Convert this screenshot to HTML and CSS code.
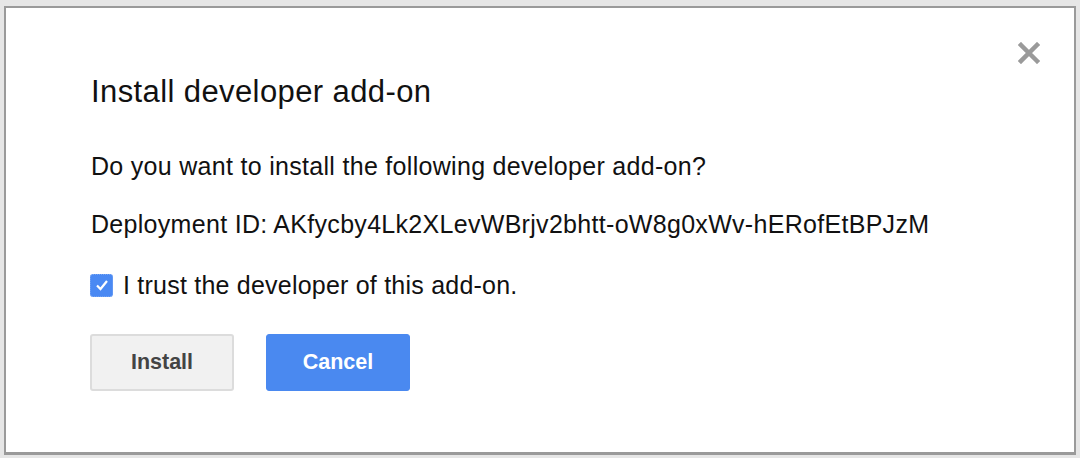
FILE: index.html
```html
<!DOCTYPE html>
<html>
<head>
<meta charset="utf-8">
<link rel="stylesheet" href="styles.css">
</head>
<body>
<div class="dialog">
  <button class="close" aria-label="Close">
    <svg width="22" height="22" viewBox="0 0 22 22"><path d="M3 3 L19 19 M19 3 L3 19" stroke="#9a9a9a" stroke-width="4.5" stroke-linecap="square"/></svg>
  </button>
  <h1 class="title">Install developer add-on</h1>
  <p class="text q">Do you want to install the following developer add-on?</p>
  <p class="text id">Deployment ID: AKfycby4Lk2XLevWBrjv2bhtt-oW8g0xWv-hERofEtBPJzM</p>
  <label class="trust">
    <span class="check"><svg width="18" height="18" viewBox="0 0 18 18"><path d="M4 9.5 L7.5 13 L14 5" fill="none" stroke="#fff" stroke-width="2.2"/></svg></span>
    <span>I trust the developer of this add-on.</span>
  </label>
  <div class="buttons">
    <button class="btn install">Install</button>
    <button class="btn cancel">Cancel</button>
  </div>
</div>
</body>
</html>
```
FILE: styles.css
```css
html, body {
  margin: 0;
  padding: 0;
  background: #e6e6e6;
  width: 1080px;
  height: 458px;
  overflow: hidden;
}
body {
  padding: 6px 0 0 4px;
  box-sizing: border-box;
  font-family: "Liberation Sans", Arial, sans-serif;
}
.dialog {
  position: relative;
  width: 1072px;
  height: 449px;
  box-sizing: border-box;
  background: #fff;
  border: 2px solid #9a9a9a;
  border-bottom-width: 3px;
  padding: 66px 0 0 85px;
}
.close {
  position: absolute;
  top: 34px;
  right: 34px;
  border: 0;
  background: none;
  padding: 0;
  width: 22px;
  height: 22px;
}
.title {
  margin: 0;
  font-size: 31px;
  letter-spacing: 0.4px;
  font-weight: normal;
  line-height: 36px;
  color: #111;
}
.text {
  margin: 0;
  font-size: 25px;
  letter-spacing: 0.3px;
  line-height: 28px;
  color: #111;
}
.q { margin-top: 42px; }
.id { margin-top: 30px; }
.trust {
  display: flex;
  align-items: center;
  margin-top: 33px;
  font-size: 25px;
  letter-spacing: 0.22px;
  line-height: 28px;
  color: #111;
  gap: 10px;
  margin-left: -1px;
}
.check {
  width: 23px;
  height: 23px;
  box-sizing: border-box;
  border-radius: 3px;
  background: #4a89f3;
  border: 1px dotted #7aa8f5;
  display: flex;
  align-items: center;
  justify-content: center;
}
.buttons {
  display: flex;
  gap: 32px;
  margin-top: 35px;
  margin-left: -1px;
}
.btn {
  font-family: "Liberation Sans", Arial, sans-serif;
  font-weight: bold;
  font-size: 21.5px;
  height: 57px;
  box-sizing: border-box;
  border-radius: 3px;
}
.install {
  width: 144px;
  background: #f1f1f1;
  border: 2px solid #dcdcdc;
  color: #444;
}
.cancel {
  width: 144px;
  background: #4a89f0;
  border: 1px solid #4a89f0;
  color: #fff;
}
```
